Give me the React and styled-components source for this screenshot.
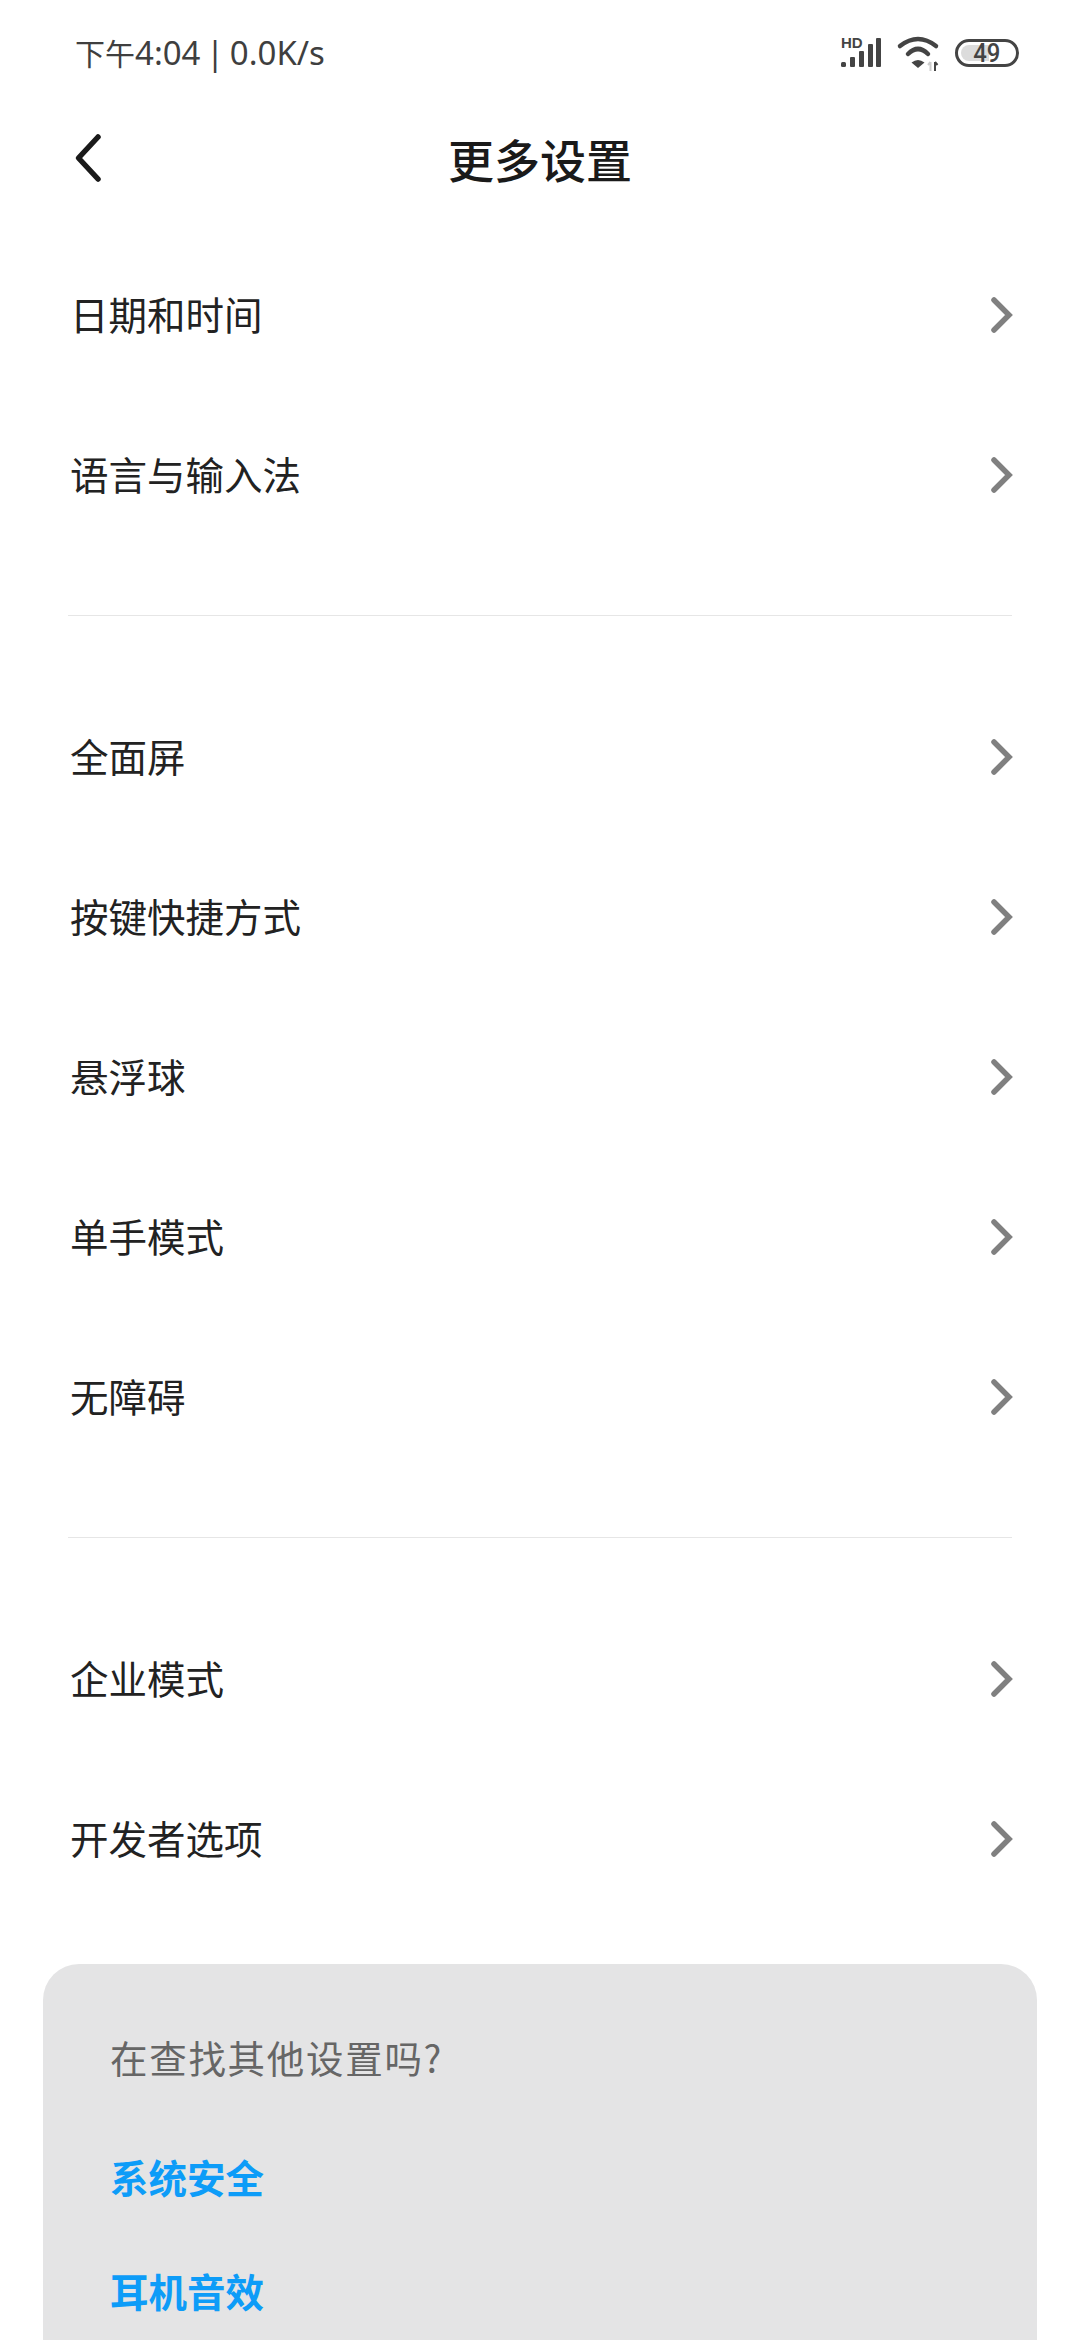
import React from "react";
import styled, { createGlobalStyle } from "styled-components";

const GlobalStyle = createGlobalStyle`
  html, body {
    margin: 0;
    padding: 0;
    background: #fff;
  }
  body {
    font-family: "Noto Sans CJK SC", "Noto Sans", sans-serif;
  }
`;

const Page = styled.div`
  width: 1080px;
  height: 2340px;
  overflow: hidden;
  background: #fff;
`;

const StatusBar = styled.div`
  height: 108px;
  padding: 0 61px 0 75px;
  box-sizing: border-box;
  display: flex;
  align-items: center;
  justify-content: space-between;
`;

const StatusText = styled.span`
  font-family: "Noto Sans", "Noto Sans CJK SC", sans-serif;
  font-size: 33px;
  line-height: 40px;
  margin-bottom: 1px;
  color: #3f3f3f;
  word-spacing: -3px;
`;

const StatusCjk = styled.span`
  font-size: 30px;
`;

const StatusIcons = styled.div`
  display: flex;
  align-items: center;
  margin-bottom: 2px;
`;

const SignalWrap = styled.div`
  position: relative;
  width: 42px;
  height: 30px;
  margin-right: 14px;
  margin-bottom: 1px;
`;

const HdLabel = styled.span`
  position: absolute;
  left: 0;
  top: -2px;
  font-family: "Liberation Sans", sans-serif;
  font-size: 15px;
  line-height: 14px;
  font-weight: 700;
  color: #444;
`;

const Battery = styled.div`
  position: relative;
  width: 64px;
  height: 28px;
  margin-left: 14px;
  box-sizing: border-box;
  border: 3px solid #444;
  border-radius: 14px;
  display: flex;
  align-items: center;
  justify-content: center;
`;

const BatteryFill = styled.div`
  position: absolute;
  left: 3px;
  top: 3px;
  bottom: 3px;
  border-radius: 9px 0 0 9px;
  background: #dcdcdc;
`;

const BatteryText = styled.span`
  position: relative;
  font-family: "Roboto", sans-serif;
  font-size: 26px;
  font-weight: 500;
  line-height: 22px;
  color: #444;
  transform: scaleX(0.92);
`;

const Header = styled.div`
  height: 100px;
  position: relative;
  display: flex;
  align-items: center;
  justify-content: center;
`;

const BackButton = styled.div`
  position: absolute;
  left: 70px;
  top: 25px;
  display: flex;
`;

const Title = styled.h1`
  margin: 0;
  font-size: 46px;
  font-weight: 500;
  color: #1a1a1a;
`;

const Groups = styled.div`
  padding-top: 28px;
`;

const Row = styled.div`
  height: 160px;
  padding: 0 66px 0 70px;
  display: flex;
  align-items: center;
  justify-content: space-between;
`;

const RowLabel = styled.span`
  font-size: 38.5px;
  padding-bottom: 6px;
  color: #222;
`;

const Divider = styled.div`
  height: 1px;
  margin: 59px 68px 62px 68px;
  background: #e6e6e6;
`;

const Card = styled.div`
  margin: 44px 43px 0 43px;
  height: 500px;
  padding: 65px 67px 0 67px;
  box-sizing: border-box;
  background: #e4e4e5;
  border-radius: 36px;
`;

const CardTitle = styled.div`
  font-size: 37.5px;
  line-height: 56px;
  letter-spacing: 1.7px;
  color: #666;
  margin-bottom: 63px;
`;

const CardLink = styled.div`
  font-size: 38.5px;
  line-height: 56px;
  font-weight: 700;
  color: #0d9cf8;
  margin-bottom: 58px;
`;

const Chevron = () => (
  <svg width="24" height="38" viewBox="0 0 24 38" fill="none" style={{ marginBottom: 2 }}>
    <path d="M4 4 L19 19 L4 34" stroke="#808080" strokeWidth="5.5" strokeLinecap="round" strokeLinejoin="miter" />
  </svg>
);

const BackIcon = () => (
  <svg width="30" height="52" viewBox="0 0 30 52" fill="none" style={{ marginLeft: 3 }}>
    <path d="M25 4 L5.5 25 L25 46" stroke="#1a1a1a" strokeWidth="5.5" strokeLinecap="round" strokeLinejoin="round" />
  </svg>
);

const SignalIcon = () => (
  <svg width="42" height="30" viewBox="0 0 42 30" fill="#444" style={{ display: "block" }}>
    <rect x="0" y="24" width="5" height="5" rx="1.5" />
    <rect x="9" y="19" width="5" height="10" rx="1" />
    <rect x="18" y="13" width="5" height="16" rx="1" />
    <rect x="27" y="6" width="5" height="23" rx="1" />
    <rect x="35" y="0" width="5" height="29" rx="1" />
  </svg>
);

const WifiIcon = () => (
  <svg width="44" height="32" viewBox="0 0 44 32" fill="none" style={{ display: "block", overflow: "visible" }}>
    <path d="M3 9 Q21 -5 39 9" stroke="#444" strokeWidth="4.5" strokeLinecap="round" />
    <path d="M11 17 Q21 7 31 17" stroke="#444" strokeWidth="4.5" strokeLinecap="round" />
    <path d="M21 31 L14.5 25.5 Q21 20.5 27.5 25.5 Z" fill="#444" />
    <path d="M33.5 25 V34 M31 28 L33.5 25" stroke="#ccc" strokeWidth="2" />
    <path d="M38 34 V25 M38 25 L40.5 28" stroke="#444" strokeWidth="2" />
  </svg>
);

const groups = [
  ["日期和时间", "语言与输入法"],
  ["全面屏", "按键快捷方式", "悬浮球", "单手模式", "无障碍"],
  ["企业模式", "开发者选项"],
];

export default function App() {
  return (
    <Page>
      <GlobalStyle />
      <StatusBar>
        <StatusText><StatusCjk>下午</StatusCjk>4:04 | 0.0K/s</StatusText>
        <StatusIcons>
          <SignalWrap>
            <HdLabel>HD</HdLabel>
            <SignalIcon />
          </SignalWrap>
          <WifiIcon />
          <Battery>
            <BatteryFill style={{ width: `${49 * 0.58}px` }} />
            <BatteryText>49</BatteryText>
          </Battery>
        </StatusIcons>
      </StatusBar>
      <Header>
        <BackButton>
          <BackIcon />
        </BackButton>
        <Title>更多设置</Title>
      </Header>
      <Groups>
        {groups.map((items, i) => (
          <React.Fragment key={i}>
            {i > 0 && <Divider />}
            {items.map((label) => (
              <Row key={label}>
                <RowLabel>{label}</RowLabel>
                <Chevron />
              </Row>
            ))}
          </React.Fragment>
        ))}
      </Groups>
      <Card>
        <CardTitle>在查找其他设置吗?</CardTitle>
        <CardLink>系统安全</CardLink>
        <CardLink>耳机音效</CardLink>
      </Card>
    </Page>
  );
}
